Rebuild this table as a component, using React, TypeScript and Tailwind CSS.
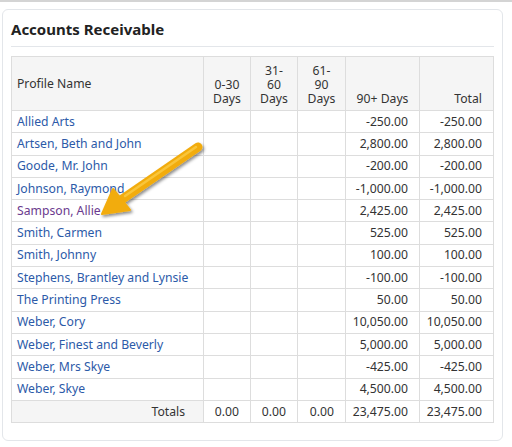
const ROWS: [string, string, string][] = [
  ["Allied Arts", "-250.00", "-250.00"],
  ["Artsen, Beth and John", "2,800.00", "2,800.00"],
  ["Goode, Mr. John", "-200.00", "-200.00"],
  ["Johnson, Raymond", "-1,000.00", "-1,000.00"],
  ["Sampson, Allie", "2,425.00", "2,425.00"],
  ["Smith, Carmen", "525.00", "525.00"],
  ["Smith, Johnny", "100.00", "100.00"],
  ["Stephens, Brantley and Lynsie", "-100.00", "-100.00"],
  ["The Printing Press", "50.00", "50.00"],
  ["Weber, Cory", "10,050.00", "10,050.00"],
  ["Weber, Finest and Beverly", "5,000.00", "5,000.00"],
  ["Weber, Mrs Skye", "-425.00", "-425.00"],
  ["Weber, Skye", "4,500.00", "4,500.00"],
];

const cell = "border border-[#dddddd] h-[22.3px] px-[5px] py-0";
const num = cell + " text-right pr-[11px]";

export default function App() {
  return (
    <div
      className="relative w-[512px] h-[447px] bg-white border-t-2 border-[#d4d4d4] text-[12.2px] text-[#333333]"
      style={{ fontFamily: '"Noto Sans", "Open Sans", sans-serif' }}
    >
      <div className="absolute left-[2px] top-[7px] w-[501px] h-[432px] rounded-[6px] border border-[#e3e6ea] px-[8px]">
        <h2 className="mt-[9px] text-[15px] font-bold text-[#222222] leading-[21px] pb-[6px] border-b border-[#e3e6ea]">
          Accounts Receivable
        </h2>

        <table className="mt-[9px] w-[482px] table-fixed border-collapse leading-[14px]">
          <colgroup>
            <col className="w-[192px]" />
            <col className="w-[47px]" />
            <col className="w-[47px]" />
            <col className="w-[48px]" />
            <col className="w-[74px]" />
            <col className="w-[74px]" />
          </colgroup>
          <thead>
            <tr className="bg-[#f5f5f5] h-[54px]">
              <th className="border border-[#dddddd] px-[5px] text-left font-normal align-middle">Profile Name</th>
              <th className="border border-[#dddddd] px-[3px] pb-[4px] font-normal align-bottom text-center">0-30<br />Days</th>
              <th className="border border-[#dddddd] px-[3px] pb-[4px] font-normal align-bottom text-center">31-<br />60<br />Days</th>
              <th className="border border-[#dddddd] px-[3px] pb-[4px] font-normal align-bottom text-center">61-<br />90<br />Days</th>
              <th className="border border-[#dddddd] px-[5px] pb-[4px] font-normal align-bottom text-center">90+ Days</th>
              <th className="border border-[#dddddd] pr-[11px] pb-[4px] font-normal align-bottom text-right">Total</th>
            </tr>
          </thead>
          <tbody>
            {ROWS.map(([name, d90, total]) => (
              <tr key={name}>
                <td className={cell + " whitespace-nowrap"}>
                  <a className={name === "Sampson, Allie" ? "text-[#6b3a8e]" : "text-[#2c5aa8]"}>{name}</a>
                </td>
                <td className={cell}></td>
                <td className={cell}></td>
                <td className={cell}></td>
                <td className={num}>{d90}</td>
                <td className={num}>{total}</td>
              </tr>
            ))}
            <tr>
              <td className={cell + " text-right pr-[18px] bg-[#f5f5f5]"}>Totals</td>
              <td className={num}>0.00</td>
              <td className={num}>0.00</td>
              <td className={num}>0.00</td>
              <td className={num}>23,475.00</td>
              <td className={num}>23,475.00</td>
            </tr>
          </tbody>
        </table>
      </div>

      {/* annotation arrow */}
      <svg className="absolute left-[95px] top-[136px]" width="115" height="85" viewBox="0 0 115 85">
        <defs>
          <filter id="sh" x="-20%" y="-20%" width="140%" height="140%">
            <feDropShadow dx="1.5" dy="2" stdDeviation="1.5" floodColor="#000" floodOpacity="0.45" />
          </filter>
        </defs>
        <g filter="url(#sh)">
          <path d="M103 9 L26 62" stroke="#f2ac0c" strokeWidth="9" strokeLinecap="round" fill="none" />
          <path d="M7 76 L18 51 L35 72 Z" fill="#f2ac0c" stroke="#f2ac0c" strokeWidth="2" strokeLinejoin="round" />
        </g>
        <path d="M101 9 L30 58" stroke="#f9c53a" strokeWidth="2.5" strokeLinecap="round" fill="none" />
      </svg>
    </div>
  );
}
